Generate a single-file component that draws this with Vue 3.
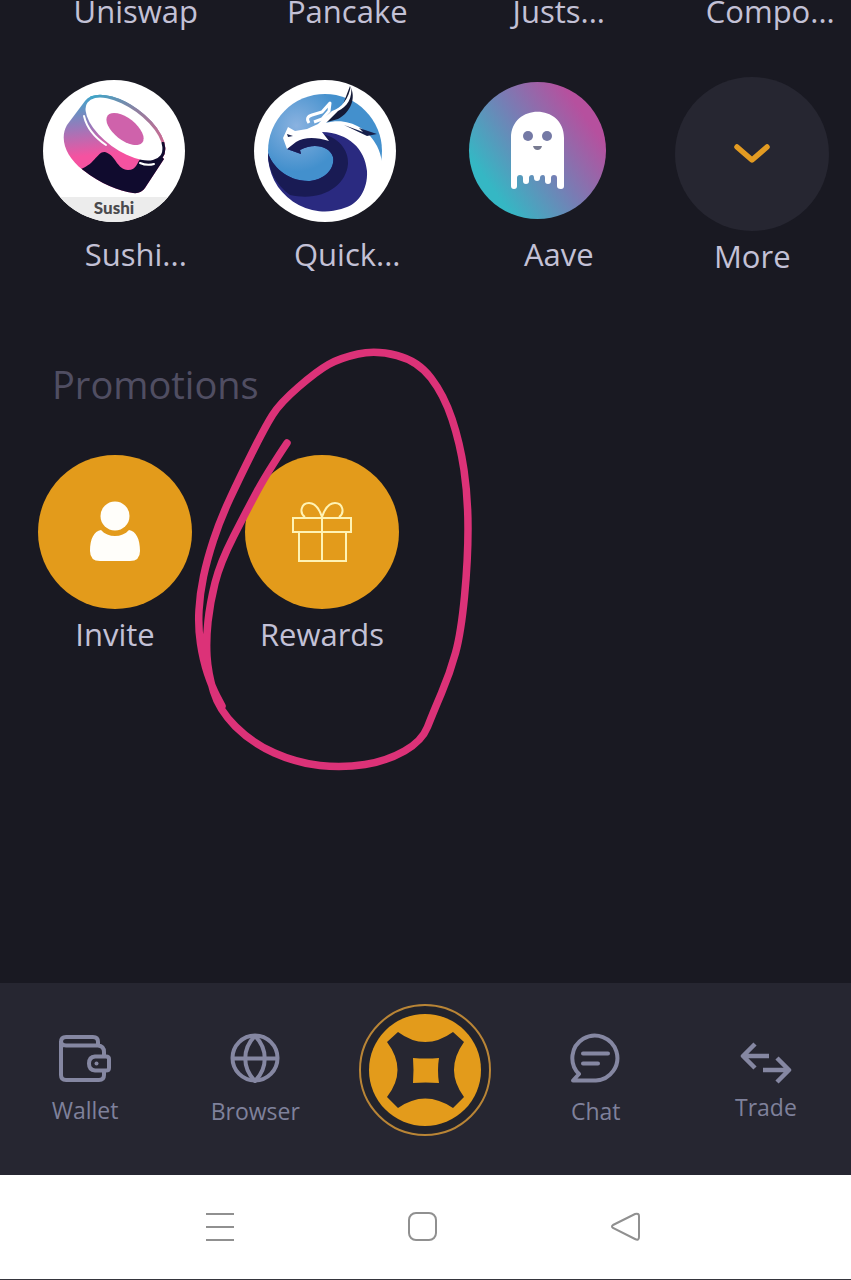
<script setup>
import { ref } from 'vue'

const previousRow = ['Uniswap', 'Pancake', 'Justs...', 'Compo...']

const tabs = [
  { id: 'wallet', label: 'Wallet', height: 53 },
  { id: 'browser', label: 'Browser', height: 55 },
  { id: 'home', label: '', height: 134 },
  { id: 'chat', label: 'Chat', height: 55 },
  { id: 'trade', label: 'Trade', height: 47 }
]

const activeTab = ref('home')

// freehand marker stroke around the rewards button
const markerPoints = [
  [287, 443], [267, 473], [247, 510], [220, 563], [210, 603], [206, 640], [208, 673],
  [219, 710], [252, 743], [297, 763], [343, 768], [387, 761], [422, 741], [433, 713],
  [450, 673], [461, 633], [468, 560], [468, 497], [460, 443], [444, 395], [418, 361],
  [376, 350], [340, 358], [317, 371], [280, 403], [265, 427], [240, 477], [220, 520],
  [207, 560], [200, 593], [198, 627], [203, 660], [212, 687], [222, 706]
]

const smoothPath = (points) => {
  let d = `M${points[0].join(' ')}`
  for (let i = 1; i < points.length - 1; i++) {
    const [x, y] = points[i]
    const [nx, ny] = points[i + 1]
    d += ` Q${x} ${y} ${(x + nx) / 2} ${(y + ny) / 2}`
  }
  return `${d} L${points[points.length - 1].join(' ')}`
}

const markerPath = smoothPath(markerPoints)
</script>

<template>
  <div class="screen">
    <main class="content">
      <div class="dapps dapps-cut">
        <a v-for="name in previousRow" :key="name" class="dapp" href="#">
          <span class="dapp-label">{{ name }}</span>
        </a>
      </div>

      <div class="dapps">
        <a class="dapp" href="#">
          <svg class="dapp-icon" viewBox="0 0 142 142">
            <defs>
              <linearGradient id="sushiFill" x1="0.35" y1="0.1" x2="0.45" y2="0.9">
                <stop offset="0" stop-color="#35a9cc" />
                <stop offset="0.35" stop-color="#9a79ba" />
                <stop offset="0.65" stop-color="#f552a0" />
              </linearGradient>
              <linearGradient id="sushiRim" x1="0" y1="0" x2="1" y2="0.6">
                <stop offset="0" stop-color="#35a9cc" />
                <stop offset="0.5" stop-color="#8f7f9f" />
                <stop offset="1" stop-color="#d9668f" />
              </linearGradient>
              <clipPath id="sushiRound"><circle cx="71" cy="71" r="71" /></clipPath>
              <clipPath id="sushiBody">
                <ellipse cx="81" cy="49" rx="48" ry="24" transform="rotate(36 81 49)" />
                <path d="M42 21 L24 45 C16 59 23 77 40 90 C58 104 76 111 90 113 Q98 114 102 108 L121 79 L90 50Z" />
              </clipPath>
            </defs>
            <g clip-path="url(#sushiRound)">
              <rect width="142" height="142" fill="#fff" />
              <rect y="117" width="142" height="25" fill="#ececec" />
            </g>
            <g clip-path="url(#sushiBody)">
              <rect width="142" height="120" fill="url(#sushiFill)" />
              <path d="M44 14 L140 14 V80 H115Z" fill="url(#sushiRim)" />
              <path d="M34 90 C52 86 54 71 62 72 C73 75 74 90 85 90 C94 90 94 82 98 78 L112 68 L119 62 L130 63 V120 H30Z" fill="#100b2e" />
            </g>
            <ellipse cx="81" cy="49" rx="45" ry="21" transform="rotate(36 81 49)" fill="#fff" />
            <ellipse cx="82" cy="49" rx="22" ry="11" transform="rotate(38 82 49)" fill="#cf62ab" />
            <path d="M41 36 Q45 53 63 65 M97 83 Q104 86 111 84" fill="none" stroke="#fff" stroke-width="2" stroke-linecap="round" />
            <text class="sushi-text" x="71" y="134" text-anchor="middle">Sushi</text>
          </svg>
          <span class="dapp-label">Sushi...</span>
        </a>

        <a class="dapp" href="#">
          <svg class="dapp-icon" viewBox="0 0 142 142">
            <defs>
              <radialGradient id="quickSky" cx="0.25" cy="0.28" r="0.4">
                <stop offset="0" stop-color="#8ab2e0" />
                <stop offset="1" stop-color="#4390cd" />
              </radialGradient>
            </defs>
            <circle cx="71" cy="71" r="71" fill="#fff" />
            <circle cx="71" cy="71" r="57" fill="url(#quickSky)" />
            <path d="M14 73 C18 86 34 102 56 101 C73 99 81 87 79 77 C76 67 61 62 46 70 L47 74 L33 69 L42 58 L64 50 C90 45 114 65 114 92 C115 110 104 123 93 127 A57 57 0 0 1 14 73Z" fill="#2a2a80" />
            <path d="M14 73 C18 86 34 102 56 101 C73 99 81 87 79 77 C76 67 61 62 46 70 L47 74 L33 69 L42 58 L66 54 C84 56 95 70 94 84 C92 106 68 122 36 115 C22 105 14 90 14 73Z" fill="#191b54" />
            <path d="M96 6 C103 18 96 33 84 39 L66 44 L74 34 L88 27Z" fill="#141a36" />
            <path d="M33 69 L29 58 L34 47 L41 51 L53 49 L64 44 L72 36 L78 31 C88 28 95 18 97 5 C99 18 93 27 84 31 L72 43 C91 37 113 46 123 66 C128 76 129 86 128 95 C125 112 110 126 88 132 C104 124 114 110 113 91 C111 69 95 53 68 52 L75 61 C62 57 50 57 42 62Z" fill="#fff" />
            <path d="M55 43 Q51 37 58 35 L68 32 L76 23 L75 31 L68 39 L60 42" fill="none" stroke="#fff" stroke-width="3" stroke-linejoin="round" />
            <path d="M90 45 L109 52 L105 48 L123 54 L113 56Z" fill="#17204b" />
            <path d="M33 54 L39 56 L34 57Z" fill="#17204b" />
          </svg>
          <span class="dapp-label">Quick...</span>
        </a>

        <a class="dapp" href="#">
          <svg class="dapp-icon" viewBox="-3 -2 142 142">
            <defs>
              <linearGradient id="aaveFill" x1="0.15" y1="0.75" x2="0.85" y2="0.25">
                <stop offset="0" stop-color="#35b7c4" />
                <stop offset="0.5" stop-color="#757fb5" />
                <stop offset="1" stop-color="#b6509e" />
              </linearGradient>
            </defs>
            <circle cx="68.5" cy="68.5" r="68.5" fill="url(#aaveFill)" />
            <path d="M42 56 C42 21 95 21 95 56 V104 Q95 107 92 107 Q88 107 88 104 V96 Q88 93 85 93 Q82 93 82 96 V99 Q82 102 79 102 Q76 102 76 99 V96 Q76 93 74 93 Q71 93 71 96 Q71 99 68 99 Q65 99 65 96 Q65 93 63 93 Q60 93 60 96 V99 Q60 102 57 102 Q54 102 54 99 V96 Q54 93 51 93 Q48 93 48 96 V104 Q48 107 45 107 Q42 107 42 104Z" fill="#fff" />
            <circle cx="59" cy="54" r="5" fill="#7479a5" />
            <circle cx="78" cy="54" r="5" fill="#7479a5" />
            <path d="M64 64 H73 Q72 68 68.5 68 Q65 68 64 64Z" fill="#777a90" />
          </svg>
          <span class="dapp-label">Aave</span>
        </a>

        <button class="action action-more" type="button">
          <svg class="action-icon" viewBox="0 0 154 154">
            <path d="M62 70 L77 83 L92 70" fill="none" stroke="#e39b22" stroke-width="5.5" stroke-linecap="round" stroke-linejoin="round" />
          </svg>
          <span>More</span>
        </button>
      </div>

      <h2 class="heading">Promotions</h2>

      <div class="promotions">
        <button class="action" type="button">
          <svg class="action-icon" viewBox="0 0 154 154">
            <path d="M63 75 C70 83 84 83 91 75 C98 76 102 84 102 96 Q102 106 92 106 H62 Q52 106 52 96 C52 84 56 76 63 75Z" fill="#fffefa" />
            <circle cx="77" cy="61" r="14.5" fill="#fffefa" />
          </svg>
          <span>Invite</span>
        </button>

        <button class="action" type="button">
          <svg class="action-icon" viewBox="0 0 154 154">
            <g fill="none" stroke="#fff3b4" stroke-width="2">
              <path d="M48 63 H106 V77 H48Z M54 77 V106 H101 V77 M77 62 V106" />
              <path d="M77 62 C74 53 69 48 64 48 C56 48 54 58 60 62 M77 62 C80 53 85 48 90 48 C98 48 100 58 94 62" />
            </g>
          </svg>
          <span>Rewards</span>
          <svg class="marker" viewBox="190 340 290 440">
            <path :d="markerPath" fill="none" stroke="#dc3278" stroke-width="7.5" stroke-linecap="round" stroke-linejoin="round" />
          </svg>
        </button>
      </div>
    </main>

    <nav class="tabbar">
      <button
        v-for="tab in tabs"
        :key="tab.id"
        class="tab"
        :class="{ 'tab-home': tab.id === 'home' }"
        type="button"
        :aria-label="tab.id"
        :aria-pressed="activeTab === tab.id"
        @click="activeTab = tab.id"
      >
        <svg v-if="tab.id === 'home'" width="134" height="134" viewBox="0 0 134 134">
          <circle cx="67" cy="66" r="65" fill="#22232c" stroke="#b98536" stroke-width="2" />
          <circle cx="67" cy="66" r="56" fill="#e39b1b" />
          <path d="M29 38 L40 28 Q67 48 95 28 L106 38 Q86 66 106 93 L95 104 Q67 85 40 104 L29 93 Q50 66 29 38Z" fill="#262631" />
          <path d="M55 54 Q68 55 81 54 Q79 66 81 79 Q67 78 55 79 Q56 66 55 54Z" fill="#e39b1b" />
        </svg>
        <svg
          v-else
          class="tab-icon"
          width="54"
          :height="tab.height"
          :viewBox="`0 0 54 ${tab.height}`"
        >
          <template v-if="tab.id === 'wallet'">
            <path d="M8 11.5 H40 V8 Q40 3 35 3 H8 Q3 3 3 8 V41 Q3 46 8 46 H41 Q46 46 46 41 V37 M8 11.5 H40 Q46 12 46 18 V22 M3 7 Q3 11.5 8 11.5" />
            <path d="M37 22.5 H48 Q51 22.5 51 25 V34 Q51 36.5 48 36.5 H37 Q31 36 31 29.5 Q31 23 37 22.5Z" />
            <circle class="clasp" cx="38.5" cy="29.5" r="2" />
          </template>
          <template v-else-if="tab.id === 'browser'">
            <circle cx="27" cy="25" r="22.5" />
            <path d="M4.5 25.5 H49.5 M27 3 C14 16 14 35 27 48 C40 35 40 16 27 3Z" />
          </template>
          <template v-else-if="tab.id === 'chat'">
            <path d="M4 47.5 L10 41 A22.5 22.5 0 1 1 27 47.5Z" />
            <path d="M14 20.5 H39 M14 30.5 H29" stroke-linecap="round" />
          </template>
          <template v-else>
            <path d="M16 7 L4 19 L16 31 M4 19 H30 M38 21 L50 33 L38 45 M50 33 H24" stroke-width="4.5" />
          </template>
        </svg>
        <span v-if="tab.label">{{ tab.label }}</span>
      </button>
    </nav>

    <div class="sysbar">
      <button type="button" aria-label="Recent apps">
        <svg width="30" height="30" viewBox="0 0 30 30">
          <path d="M1 2 H29 M1 15 H29 M1 28 H29" />
        </svg>
      </button>
      <button type="button" aria-label="Home">
        <svg width="30" height="30" viewBox="0 0 30 30">
          <rect x="1" y="1" width="27" height="27" rx="7" />
        </svg>
      </button>
      <button type="button" aria-label="Back">
        <svg width="30" height="30" viewBox="0 0 30 30">
          <path d="M2 13 L24 2 Q28 1 28 4 V25 Q28 29 24 27 L2 16 Q0 14.5 2 13Z" />
        </svg>
      </button>
    </div>
  </div>
</template>

<style>
body {
  margin: 0;
  background: #191922;
}
</style>

<style scoped>
.screen {
  display: flex;
  flex-direction: column;
  min-height: 100vh;
  overflow: hidden;
  background: #191922;
  color: #c3c1d6;
  font-family: 'Open Sans', 'Noto Sans', sans-serif;
  font-size: 31px;
  line-height: 40px;
}

button {
  padding: 0;
  border: 0;
  background: none;
  color: inherit;
  font: inherit;
  cursor: pointer;
}

svg {
  display: block;
}

.content {
  flex: 1;
}

.dapps {
  display: grid;
  grid-template-columns: repeat(4, 1fr);
  margin-right: -3px;
  padding-left: 8px;
}

.dapps-cut {
  margin-top: -9px;
  margin-bottom: 46px;
}

.dapp {
  display: flex;
  flex-direction: column;
  align-items: center;
  color: inherit;
  text-decoration: none;
}

.dapp-icon {
  width: 142px;
  height: 142px;
  margin-top: 3px;
  margin-bottom: 12px;
}

.dapp-label {
  padding-left: 44px;
}

.sushi-text {
  fill: #4a4a4d;
  font-family: Lato, sans-serif;
  font-size: 17px;
  font-weight: 900;
}

.action {
  position: relative;
  display: flex;
  flex-direction: column;
  align-items: center;
  gap: 5px;
}

.action-icon {
  width: 154px;
  height: 154px;
  border-radius: 50%;
  background: #e39b1b;
}

.action-more {
  padding-left: 8px;
}

.action-more .action-icon {
  background: #262631;
}

.heading {
  margin: 84px 0 47px 52px;
  color: #504e62;
  font-size: 38px;
  font-weight: 400;
  line-height: 48px;
}

.promotions {
  display: flex;
  gap: 53px;
  padding-left: 38px;
}

.marker {
  position: absolute;
  top: -115px;
  left: -55px;
  width: 290px;
  height: 440px;
  pointer-events: none;
}

.tabbar {
  display: grid;
  grid-template-columns: repeat(5, 1fr);
  height: 192px;
  background: #262631;
  color: #7f819b;
  font-size: 23px;
  line-height: 34px;
}

.tab {
  display: flex;
  flex-direction: column;
  align-items: center;
  justify-content: center;
  gap: 6px;
  padding-top: 3px;
}

.tab-home {
  padding-bottom: 20px;
}

.tab-icon {
  fill: none;
  stroke: #8587a2;
  stroke-width: 4;
  stroke-linejoin: round;
}

.clasp {
  fill: #8587a2;
  stroke: none;
}

.sysbar {
  display: grid;
  grid-template-columns: repeat(3, 1fr);
  height: 104px;
  padding: 0 124px 0 118px;
  border-bottom: 1px solid #35353c;
  background: #fff;
}

.sysbar button {
  display: flex;
  align-items: center;
  justify-content: center;
}

.sysbar svg {
  fill: none;
  stroke: #909090;
  stroke-width: 2;
}
</style>
